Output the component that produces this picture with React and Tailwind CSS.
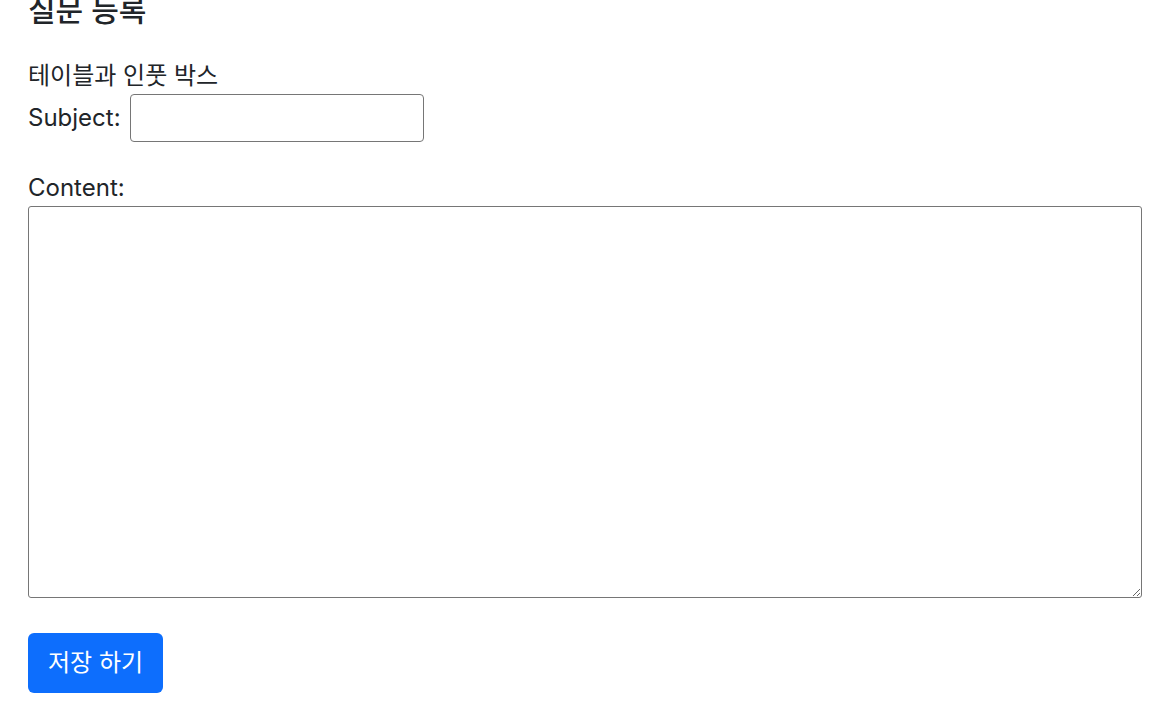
export default function App() {
  return (
    <div
      className="min-h-screen bg-white px-[28px] text-[#212529] text-[24px] leading-[36px]"
      style={{ fontFamily: 'Inter, "Noto Sans CJK KR", sans-serif' }}
    >
      {/* Heading (cut off at the top, as in the scrolled page) */}
      <h5 className="mt-[-8px] text-[30px] leading-[36px] font-medium">질문 등록</h5>

      <div className="mt-[30px]">테이블과 인풋 박스</div>

      <form onSubmit={(e) => e.preventDefault()}>
        <div className="flex items-center">
          <label htmlFor="subject">Subject:</label>
          <input
            id="subject"
            type="text"
            className="ml-[9px] h-[48px] w-[294px] rounded-[4px] border border-[#767676] px-2 outline-none"
          />
        </div>

        <div className="mt-[28px]">
          <label htmlFor="content">Content:</label>
        </div>
        <textarea
          id="content"
          className="block h-[392px] w-full rounded-[3px] border border-[#767676] p-1 outline-none"
        />

        <button
          type="submit"
          className="mt-[35px] h-[60px] rounded-[6px] bg-[#0d6efd] px-[20px] text-[24px] leading-[36px] text-white"
        >
          저장 하기
        </button>
      </form>
    </div>
  );
}
